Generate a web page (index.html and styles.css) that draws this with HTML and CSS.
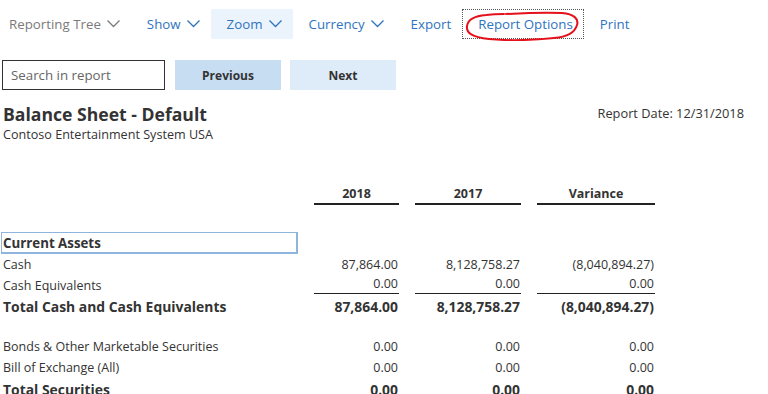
FILE: index.html
```html
<!DOCTYPE html>
<html lang="en">
<head>
    <meta charset="UTF-8">
    <meta name="viewport" content="width=device-width, initial-scale=1.0">
    <title>Balance Sheet - Default</title>
    <link rel="stylesheet" href="styles.css">
</head>
<body>
    <!-- Toolbar -->
    <div class="toolbar">
        <span class="tool muted first">Reporting Tree
            <svg class="chev" viewBox="0 0 13 8"><polyline points="0.5,0.5 6.5,6.5 12.5,0.5"/></svg>
        </span>
        <span class="tool">Show
            <svg class="chev" viewBox="0 0 13 8"><polyline points="0.5,0.5 6.5,6.5 12.5,0.5"/></svg>
        </span>
        <span class="tool hover">Zoom
            <svg class="chev" viewBox="0 0 13 8"><polyline points="0.5,0.5 6.5,6.5 12.5,0.5"/></svg>
        </span>
        <span class="tool">Currency
            <svg class="chev" viewBox="0 0 13 8"><polyline points="0.5,0.5 6.5,6.5 12.5,0.5"/></svg>
        </span>
        <span class="tool">Export</span>
        <span class="tool focused">Report Options
            <!-- hand drawn annotation -->
            <svg class="scribble" viewBox="0 0 118 31">
                <path d="M42,4 C60,3 80,2 98,3 C110,4 115,9 113,15 C111,22 103,27 90,28 C70,30 45,31 25,29 C8,27 2,23 3,16 C4,9 10,6 22,5 C30,4 36,4 40,4"/>
            </svg>
        </span>
        <span class="tool">Print</span>
    </div>

    <!-- Search -->
    <div class="search-row">
        <input type="text" class="search" placeholder="Search in report">
        <button class="btn btn-prev">Previous</button>
        <button class="btn btn-next">Next</button>
    </div>

    <!-- Report header -->
    <div class="report-head">
        <div>
            <h1 class="report-title">Balance Sheet - Default</h1>
            <p class="report-company">Contoso Entertainment System USA</p>
        </div>
        <p class="report-date">Report Date: 12/31/2018</p>
    </div>

    <!-- Report table -->
    <div class="report">
        <div class="row head">
            <span></span>
            <span class="col">2018</span>
            <span class="col">2017</span>
            <span class="col">Variance</span>
        </div>

        <div class="row section">
            <span class="section-name">Current Assets</span>
        </div>
        <div class="row">
            <span class="label">Cash</span>
            <span class="num">87,864.00</span>
            <span class="num">8,128,758.27</span>
            <span class="num">(8,040,894.27)</span>
        </div>
        <div class="row ruled">
            <span class="label">Cash Equivalents</span>
            <span class="num line">0.00</span>
            <span class="num line">0.00</span>
            <span class="num line">0.00</span>
        </div>
        <div class="row total">
            <span class="label">Total Cash and Cash Equivalents</span>
            <span class="num">87,864.00</span>
            <span class="num">8,128,758.27</span>
            <span class="num">(8,040,894.27)</span>
        </div>
        <div class="row spacer"></div>
        <div class="row">
            <span class="label">Bonds &amp; Other Marketable Securities</span>
            <span class="num">0.00</span>
            <span class="num">0.00</span>
            <span class="num">0.00</span>
        </div>
        <div class="row">
            <span class="label">Bill of Exchange (All)</span>
            <span class="num">0.00</span>
            <span class="num">0.00</span>
            <span class="num">0.00</span>
        </div>
        <div class="row total">
            <span class="label">Total Securities</span>
            <span class="num">0.00</span>
            <span class="num">0.00</span>
            <span class="num">0.00</span>
        </div>
    </div>
</body>
</html>
```

FILE: styles.css
```css
/* Base */
* {
    margin: 0;
    padding: 0;
    box-sizing: border-box;
}

body {
    font-family: 'Open Sans', 'Noto Sans', sans-serif;
    color: #333;
    background: white;
    padding: 0 2px;
    overflow: hidden;
}

/* Toolbar */
.toolbar {
    display: flex;
    margin: 9px 0 0 -2px;
    height: 30px;
}

.tool {
    position: relative;
    display: flex;
    align-items: center;
    padding: 0 11px 0 16px;
    font-size: 13.3px;
    color: #2f74c0;
    white-space: nowrap;
}

.tool.first {
    padding-left: 9px;
}

.tool.muted {
    color: #7a7a7a;
}

.tool.hover {
    background-color: #ebf3fc;
}

.tool.focused {
    outline: 1px dotted #555;
    outline-offset: -1px;
}

.chev {
    width: 13px;
    height: 8px;
    margin-left: 6px;
    fill: none;
    stroke: currentColor;
    stroke-width: 1.3;
}

.scribble {
    position: absolute;
    left: 2px;
    top: 1px;
    width: 118px;
    height: 31px;
    fill: none;
    stroke: #e4111b;
    stroke-width: 2;
    stroke-linecap: round;
}

/* Search row */
.search-row {
    display: flex;
    gap: 10px;
    margin-top: 21px;
    height: 30px;
}

.search {
    width: 163px;
    border: 1px solid #333;
    padding: 0 8px;
    font-family: inherit;
    font-size: 13.3px;
    outline: none;
}

.search::placeholder {
    color: #666;
}

.btn {
    width: 106px;
    border: none;
    font-family: inherit;
    font-size: 12px;
    font-weight: bold;
    color: #333;
}

.btn-prev {
    background-color: #c7ddf2;
}

.btn-next {
    background-color: #deebf8;
    margin-left: -1px;
}

/* Report header */
.report-head {
    display: flex;
    justify-content: space-between;
    margin-top: 12px;
    padding-right: 22px;
}

.report-title {
    font-size: 17.6px;
    font-weight: bold;
    line-height: 24px;
    padding-left: 1px;
}

.report-company {
    font-size: 12.6px;
    line-height: 18px;
    padding-left: 1px;
}

.report-date {
    font-size: 12.8px;
    line-height: 18px;
    margin-top: 2px;
}

/* Report table */
.report {
    margin-top: 39px;
}

.row {
    display: grid;
    grid-template-columns: 296px 85px 106px 118px;
    column-gap: 16px;
    height: 21px;
    align-items: center;
    font-size: 12.5px;
}

.row.head {
    height: 22px;
    font-size: 12.5px;
    font-weight: bold;
    margin-bottom: 27px;
}

.col {
    border-bottom: 2px solid #222;
    padding-bottom: 1px;
    align-self: stretch;
    display: flex;
    align-items: flex-end;
    justify-content: center;
}

.section {
    height: 22px;
}

.section-name {
    grid-column: 1;
    display: block;
    height: 22px;
    line-height: 20px;
    font-size: 13.3px;
    font-weight: bold;
    padding-left: 1px;
    border: 1px solid #8fb5de;
    border-right-width: 2px;
    border-bottom-width: 2px;
    margin-left: -1px;
}

.label {
    padding-left: 1px;
}

.num {
    text-align: right;
    padding-right: 1px;
}

.row.ruled {
    height: 20px;
}

.num.line {
    border-bottom: 1px solid #222;
    line-height: 18px;
    align-self: end;
    margin-bottom: 1px;
}

.row.total {
    height: 22px;
    font-size: 13.9px;
    font-weight: bold;
}

.row.spacer {
    height: 19px;
}
```
